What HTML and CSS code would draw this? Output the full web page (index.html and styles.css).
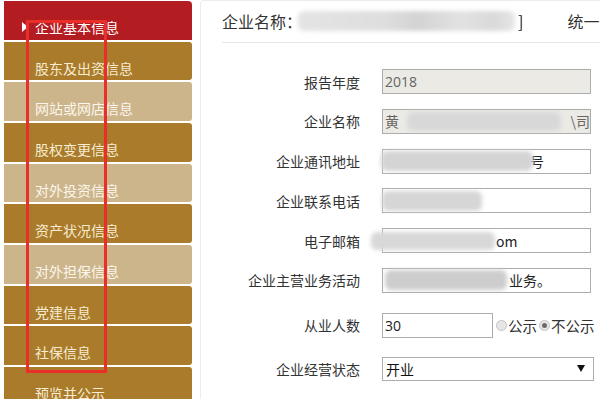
FILE: index.html
```html
<!DOCTYPE html>
<html lang="zh-CN">
<head>
<meta charset="utf-8">
<link rel="stylesheet" href="styles.css">
</head>
<body>
<div class="page">
  <nav class="sidebar">
    <div class="item active"><span class="arrow"></span>企业基本信息</div>
    <div class="item gold">股东及出资信息</div>
    <div class="item tan">网站或网店信息</div>
    <div class="item gold">股权变更信息</div>
    <div class="item tan">对外投资信息</div>
    <div class="item gold">资产状况信息</div>
    <div class="item tan">对外担保信息</div>
    <div class="item gold">党建信息</div>
    <div class="item gold">社保信息</div>
    <div class="item gold">预览并公示</div>
    <div class="annot"></div>
  </nav>
  <main class="panel">
    <div class="header">
      <span>企业名称：</span><span class="blur hblur"></span><span class="bracket">]</span><span class="uni">统一</span>
    </div>
    <div class="form">
      <div class="row">
        <div class="label">报告年度</div>
        <div class="field dis">2018</div>
      </div>
      <div class="row">
        <div class="label">企业名称</div>
        <div class="field dis"><span class="ch">黄</span><span class="blur b-name"></span><span class="ch">\司</span></div>
      </div>
      <div class="row">
        <div class="label">企业通讯地址</div>
        <div class="field"><span class="blur b-addr"></span><span class="ch">号</span></div>
      </div>
      <div class="row">
        <div class="label">企业联系电话</div>
        <div class="field"><span class="blur b-phone"></span></div>
      </div>
      <div class="row">
        <div class="label">电子邮箱</div>
        <div class="field"><span class="blur b-mail"></span><span class="ch">om</span></div>
      </div>
      <div class="row">
        <div class="label">企业主营业务活动</div>
        <div class="field"><span class="blur b-biz"></span><span class="ch">业务。</span></div>
      </div>
      <div class="row row-emp">
        <div class="label">从业人数</div>
        <div class="field small">30</div>
        <div class="radios">
          <span class="radio"></span><span class="rtext">公示</span>
          <span class="radio on"></span><span class="rtext">不公示</span>
        </div>
      </div>
      <div class="row row-sel">
        <div class="label">企业经营状态</div>
        <div class="field select"><span>开业</span><span class="caret"></span></div>
      </div>
    </div>
  </main>
</div>
</body>
</html>
```
FILE: styles.css
```css
* { box-sizing: border-box; }
html, body { margin: 0; padding: 0; background: #fff; }
body {
  width: 600px;
  height: 399px;
  overflow: hidden;
  font-family: "Noto Sans CJK SC", "Noto Sans", sans-serif;
  font-size: 14px;
  color: #333;
}
.page {
  display: flex;
  align-items: flex-start;
}
.sidebar {
  position: relative;
  width: 188px;
  margin-left: 4px;
  margin-top: 1px;
  display: flex;
  flex-direction: column;
  gap: 2px;
  flex-shrink: 0;
}
.item {
  height: 38.67px;
  padding-top: 16px;
  padding-left: 31px;
  line-height: 20px;
  font-size: 14px;
  border-radius: 0 3px 3px 0;
  position: relative;
  white-space: nowrap;
}
.item.active {
  background: #b31c20;
  color: #fff;
  border-radius: 0 4px 0 0;
}
.item.gold { background: #a97b2a; color: #f7ecd2; }
.item.tan { background: #cdb58b; color: #fbf6ec; }
.arrow {
  position: absolute;
  left: 18px;
  top: 21px;
  width: 0;
  height: 0;
  border-top: 5px solid transparent;
  border-bottom: 5px solid transparent;
  border-left: 6px solid #fff;
}
.annot {
  position: absolute;
  left: 22px;
  top: 19px;
  width: 81px;
  height: 353px;
  border: 3px solid #ea2f2a;
}
.panel {
  flex: 1;
  margin-left: 8px;
  height: 399px;
  border-left: 1px solid #ececec;
  border-top: 1px solid #ececec;
  border-radius: 4px 0 0 0;
  padding-left: 21px;
  overflow: hidden;
}
.header {
  display: flex;
  align-items: center;
  height: 42px;
  padding-bottom: 2px;
  border-bottom: 1px solid #e6e6e6;
  font-size: 16px;
  line-height: 22px;
  white-space: nowrap;
}
.blur {
  display: inline-block;
  background: #cfcfcf;
  filter: blur(2px);
  border-radius: 6px;
}
.hblur {
  width: 217px;
  height: 20px;
  margin-left: -4px;
  background: linear-gradient(90deg, #e4e4e4, #dedede 40%, #d3d3d3 55%, #e2e2e2 75%, #d9d9d9 90%, #e6e6e6);
}
.bracket { margin-left: 3px; color: #222; }
.uni { margin-left: 44px; }
.form {
  display: flex;
  flex-direction: column;
  gap: 14.8px;
  margin-top: 26px;
}
.row {
  display: flex;
  align-items: center;
  height: 25px;
}
.row-emp { margin-top: 5px; }
.row-sel { margin-top: 4px; height: 24px; }
.label {
  width: 138px;
  text-align: right;
  margin-right: 22px;
  white-space: nowrap;
  flex-shrink: 0;
}
.field {
  width: 209px;
  height: 25px;
  border: 1px solid #acacac;
  background: #fff;
  display: flex;
  align-items: center;
  padding-left: 2px;
  font-family: "Open Sans", "Noto Sans CJK SC", sans-serif;
  font-size: 14px;
  color: #222;
  white-space: nowrap;
  overflow: visible;
}
.field.dis { background: #ebeae5; color: #666; }
.field .ch { font-family: "Noto Sans CJK SC", sans-serif; }
.b-name { width: 165px; height: 19px; margin-left: 8px; margin-right: 10px; background: #d8d8d8; }
.b-addr { width: 152px; height: 20px; margin-left: -4px; margin-right: -3px; background: #d4d4d4; }
.b-phone { width: 100px; height: 20px; margin-left: -3px; background: #d6d6d6; }
.b-mail { width: 124px; height: 18px; margin-left: -14px; margin-right: 1px; background: #d8d8d8; }
.b-biz { width: 122px; height: 20px; margin-left: 0; margin-right: 2px; background: #cdcdcd; }
.field.small { width: 111px; height: 25px; color: #222; }
.radios {
  display: flex;
  align-items: center;
  margin-left: 3px;
  white-space: nowrap;
  font-size: 14.5px;
  color: #333;
}
.radio {
  width: 11px;
  height: 11px;
  border-radius: 50%;
  border: 1px solid #c4c4c4;
  background: #e6e6e6;
  display: inline-block;
  position: relative;
  margin-right: 1px;
}
.radio.on::after {
  content: "";
  position: absolute;
  left: 2px;
  top: 2px;
  width: 5px;
  height: 5px;
  border-radius: 50%;
  background: #6a6a6a;
}
.rtext { margin-right: 2px; }
.select {
  width: 212px;
  height: 24px;
  justify-content: space-between;
  padding-left: 3px;
  padding-right: 8px;
  font-family: "Noto Sans CJK SC", sans-serif;
  color: #111;
}
.caret {
  width: 0;
  height: 0;
  border-left: 4px solid transparent;
  border-right: 4px solid transparent;
  border-top: 7px solid #111;
}
```
